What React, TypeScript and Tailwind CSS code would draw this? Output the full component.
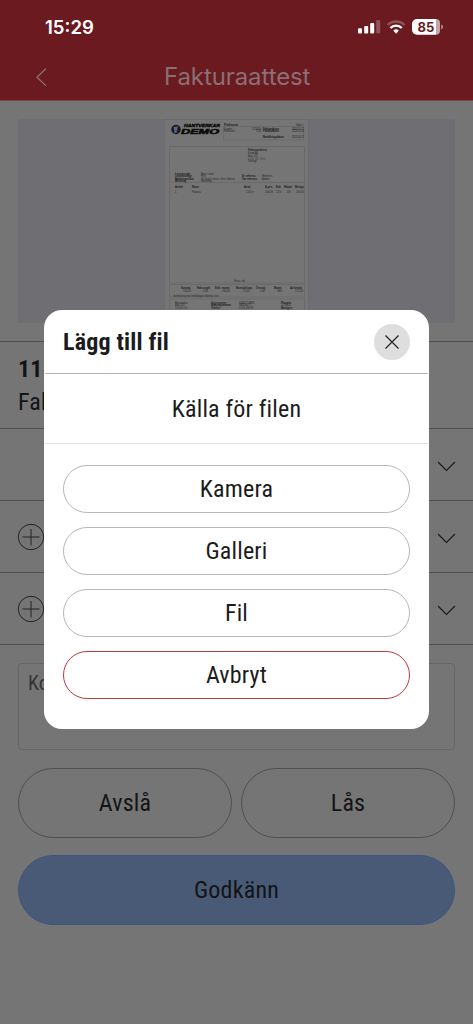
import type { ReactNode } from 'react';

interface TextProps {
  children: ReactNode;
  className?: string;
}

const sources = ['Kamera', 'Galleri', 'Fil'];

// Condensed cut of the app font
function Narrow({ children, className = 'text-[24px]' }: TextProps) {
  return (
    <span
      className={`inline-block whitespace-nowrap font-['Roboto_Condensed','Roboto',sans-serif] leading-7 tracking-[0.2px] [font-stretch:75%] ${className}`}
    >
      {children}
    </span>
  );
}

function Pill({ children, className = '' }: TextProps) {
  return (
    <button
      type="button"
      className={`flex items-center justify-center rounded-full border ${className}`}
    >
      <Narrow>{children}</Narrow>
    </button>
  );
}

function StatusIcons() {
  return (
    <svg width="90" height="20" viewBox="0 0 90 20" fill="#fff">
      <rect x="1" y="11.3" width="4" height="5.2" rx="1" />
      <rect x="7.2" y="9" width="4" height="7.5" rx="1" />
      <rect x="13.2" y="6" width="4" height="10.5" rx="1" />
      <rect x="19.2" y="3" width="4" height="13.5" rx="1" opacity="0.25" />
      <g fill="none" stroke="#fff">
        <path d="M30.6 8a12 12 0 0 1 17 0" strokeWidth="2.4" opacity="0.25" />
        <path d="M33.4 11a8 8 0 0 1 11.4 0" strokeWidth="2.4" />
      </g>
      <path d="M36.3 13.6a4 4 0 0 1 5.6 0L39.1 16.8z" />
      <path d="M60 2h19.300v15.700H60a5 5 0 0 1-5-5V7a5 5 0 0 1 5-5z" />
      <path d="M79.300 2a4.500 4.500 0 0 1 3.700 5v5.700a4.500 4.500 0 0 1-3.700 5z" opacity="0.6" />
      <path d="M84.200 7.500a2.600 2.600 0 0 1 0 5z" opacity="0.5" />
      <text
        x="69"
        y="14.500"
        textAnchor="middle"
        fontFamily="Inter, sans-serif"
        fontSize="13"
        fontWeight="700"
        fill="#6b1a20"
      >
        85
      </text>
    </svg>
  );
}

function Invoice() {
  return (
    <svg
      width="145"
      height="204"
      viewBox="164 119 145 204"
      fontFamily="Liberation Sans, sans-serif"
      fontSize="2.6"
      fill="#262626"
    >
      <rect x="164.500" y="119.500" width="144" height="210" fill="#757575" stroke="#6b6b6e" />
      <circle cx="176" cy="129.500" r="4.700" fill="#17191d" />
      <path d="M173.500 127l4.500-.8-1.500 6.500-1.800.5z" fill="#51698c" />
      <g fontStyle="italic" fontWeight="700" fill="#0a0a0a" stroke="#0a0a0a">
        <text x="184" y="127.200" fontSize="3.400" textLength="36" lengthAdjust="spacingAndGlyphs" strokeWidth="0.300">
          HANTVERKAR
        </text>
        <text x="181" y="133.900" fontSize="6.800" textLength="38" lengthAdjust="spacingAndGlyphs" strokeWidth="0.500">
          DEMO
        </text>
      </g>
      <text x="224" y="125.700" fontSize="3.600" fontWeight="700" textLength="14" lengthAdjust="spacingAndGlyphs">
        Faktura
      </text>
      <g fill="none" stroke="#606060" strokeWidth="0.500">
        <path d="M223.500 126.500h80v13.500h-80z" />
        <path d="M169.500 146.500h135v136.500h-135zM169.500 182.500h135M169.500 284.500h135v12.500h-135zM169.500 299h135v28h-135z" />
      </g>
      <text x="296" y="126">Sida 1</text>
      <text x="224" y="129.500">Kundnr</text>
      <text x="252" y="129.500" textLength="9">123456</text>
      <text x="224" y="132.300">Fakturanr</text>
      <text x="256" y="132.300">1181</text>
      <g fontWeight="700" fill="#1c1c1c">
        <text x="263" y="129.500" textLength="16">Fakturadatum</text>
        <text x="263" y="132.300" textLength="16">Förfallodatum</text>
        <text x="263" y="137.700" textLength="21">Beställningsdatum</text>
        <text x="248" y="151" textLength="19">Fakturaadress</text>
        <text x="175" y="174.500" textLength="15">Leveranssätt</text>
        <text x="175" y="177.100" textLength="17">Leveransvillkor</text>
        <text x="175" y="179.700" textLength="19">Betalningsvillkor</text>
        <text x="175" y="182.300" textLength="11">Märkning</text>
        <text x="242" y="177.100">Er referens</text>
        <text x="242" y="179.700">Vår referens</text>
        <text x="175" y="187.500">Artikel</text>
        <text x="192" y="187.500">Namn</text>
        <text x="244" y="187.500">Antal</text>
        <text x="265" y="187.500">A-pris</text>
        <text x="276" y="187.500">Enh</text>
        <text x="284" y="187.500">Rabatt</text>
        <text x="295" y="187.500">Belopp</text>
        <text x="181" y="289">Summa</text>
        <text x="197" y="289">Fakt.avgift</text>
        <text x="215" y="289">Exkl. moms</text>
        <text x="236" y="289">Momsbelopp</text>
        <text x="256" y="289">Öresutj.</text>
        <text x="274" y="289">Moms</text>
        <text x="290" y="289">Att betala</text>
      </g>
      <text x="292" y="129.500" textLength="12">2023-10-17</text>
      <text x="292" y="132.300" textLength="12">2023-11-16</text>
      <text x="292" y="137.700" textLength="12">2023-10-17</text>
      <text x="248" y="154">Kund AB</text>
      <text x="248" y="156.800">Box 123</text>
      <text x="248" y="159.600" textLength="17">123 45 Ort</text>
      <text x="248" y="162.400">Sverige</text>
      <text x="201" y="174.500">Brev / mail</text>
      <text x="201" y="177.100">Fritt</text>
      <text x="201" y="179.700" textLength="34">30 dagar netto, efter faktura</text>
      <text x="201" y="182.300">Märkning</text>
      <text x="262" y="177.100">Referens</text>
      <text x="262" y="179.700">Admin</text>
      <text x="175" y="193">1</text>
      <text x="192" y="193">Faktura</text>
      <text x="246" y="193">1,00 st</text>
      <text x="265" y="193">100,00</text>
      <text x="276" y="193">25%</text>
      <text x="287" y="193">0%</text>
      <text x="296" y="193">100,00</text>
      <text x="234" y="282">Forts. sid</text>
      <text x="183" y="291.700">100,00</text>
      <text x="203" y="291.700">0,00</text>
      <text x="222" y="291.700">100,00</text>
      <text x="243" y="291.700">25,00</text>
      <text x="260" y="291.700">0,00</text>
      <text x="277" y="291.700">SEK</text>
      <text x="295" y="291.700">125,00</text>
      <text x="173" y="296.500" textLength="46" lengthAdjust="spacingAndGlyphs">
        Vid betalning efter förfallodagen debiteras ränta
      </text>
      <text x="175" y="303.500">Hantverkar</text>
      <text x="175" y="306.200">Box 123</text>
      <text x="175" y="309">123 45 Ort</text>
      <g fontWeight="700" fill="#1c1c1c">
        <text x="211" y="303.500">Org.nummer</text>
        <text x="211" y="306.200" textLength="20">Momsreg.nummer</text>
        <text x="211" y="309">Telefon</text>
        <text x="281" y="303.500">Plusgiro</text>
        <text x="281" y="309">Bankgiro</text>
      </g>
      <text x="239" y="303.500">556677-8899</text>
      <text x="239" y="306.200">SE556677</text>
      <text x="239" y="309">0123-45678</text>
      <text x="281" y="306.200">12345-6</text>
    </svg>
  );
}

function Section({ addable = false }: { addable?: boolean }) {
  return (
    <div className="flex h-[72px] items-center justify-between border-b border-[#505050] px-[17px]">
      <svg width="28" height="28" viewBox="0 0 28 28" fill="none" stroke="#242424" strokeWidth="1">
        {addable && (
          <>
            <circle cx="14" cy="14" r="12.700" />
            <path d="M14 6v16.500M5.500 14h17" />
          </>
        )}
      </svg>
      <svg
        className="mt-0.5"
        width="19"
        height="12"
        viewBox="0 0 19 12"
        fill="none"
        stroke="#1c1c1c"
        strokeWidth="1.200"
      >
        <path d="M1 2l8.500 8.500L18 2" />
      </svg>
    </div>
  );
}

export default function App() {
  return (
    <div className="relative h-[1024px] w-[473px] overflow-hidden bg-[#757575] text-[#131415]">
      <header className="h-[101px] border-b border-[#6c4848] bg-[#6b1a20]">
        <div className="flex h-[54px] justify-between pr-[26px] pl-[45px] pt-[17px]">
          <span className="font-['Inter',sans-serif] text-[18.6px] leading-[21px] font-semibold text-white">
            15:29
          </span>
          <StatusIcons />
        </div>
        <div className="flex h-[45px] items-center">
          <svg
            className="ml-[35px]"
            width="13"
            height="20"
            viewBox="0 0 13 20"
            fill="none"
            stroke="#8a7074"
            strokeWidth="1.300"
          >
            <path d="M11 1.500L2 10.200l9 8.700" />
          </svg>
          <h1 className="ml-[116px] font-['Inter',sans-serif] text-[24px] leading-7 tracking-[-0.1px] text-[#8a7074]">
            Fakturaattest
          </h1>
        </div>
      </header>

      <main>
        <div className="mx-[18px] mt-[18px] flex h-[204px] justify-center bg-[#6e6e73]">
          <Invoice />
        </div>
        <div className="mt-[18px] flex h-[88px] flex-col border-y border-[#505050] pt-[13px] pl-[18px]">
          <Narrow className="text-[24px] font-bold">1181</Narrow>
          <Narrow className="mt-[5px] text-[24px]">Faktura</Narrow>
        </div>
        <Section />
        <Section addable />
        <Section addable />

        <div className="mx-[18px] mt-[18px] h-[87px] rounded-[4px] border border-[#666] pt-[5px] pl-[9px] text-[#353535]">
          <Narrow className="text-[20px]">Kommentar</Narrow>
        </div>
        <div className="mx-[18px] mt-[18px] grid grid-cols-2 gap-[9px]">
          <Pill className="h-[70px] border-[#505050]">Avslå</Pill>
          <Pill className="h-[70px] border-[#505050]">Lås</Pill>
        </div>
        <div className="mx-[18px] mt-[17px]">
          <Pill className="h-[70px] w-full border-[#3c5680] bg-[#485a75]">Godkänn</Pill>
        </div>
      </main>

      <div
        role="dialog"
        className="absolute top-[310px] left-[44px] h-[419px] w-[385px] rounded-[18px] bg-white px-px text-[#1b1b1d]"
      >
        <div className="flex h-[64px] items-center justify-between border-b border-[#b5b5b5] px-[18px]">
          <Narrow className="text-[24px] font-bold">Lägg till fil</Narrow>
          <button
            type="button"
            aria-label="Stäng"
            className="flex size-[36px] items-center justify-center rounded-full bg-[#dedede]"
          >
            <svg width="14" height="14" viewBox="0 0 14 14" stroke="#222" strokeWidth="1.200">
              <path d="M.5.5l13 13M13.500.5l-13 13" />
            </svg>
          </button>
        </div>
        <div className="flex h-[70px] items-center justify-center border-b border-[#e0e0e0]">
          <Narrow>Källa för filen</Narrow>
        </div>
        <div className="flex flex-col gap-[14px] px-[18px] pt-[21px]">
          {sources.map((label) => (
            <Pill key={label} className="h-[48px] border-[#b8b8b8]">
              {label}
            </Pill>
          ))}
          <Pill className="h-[48px] border-[#c4353f]">Avbryt</Pill>
        </div>
      </div>
    </div>
  );
}
